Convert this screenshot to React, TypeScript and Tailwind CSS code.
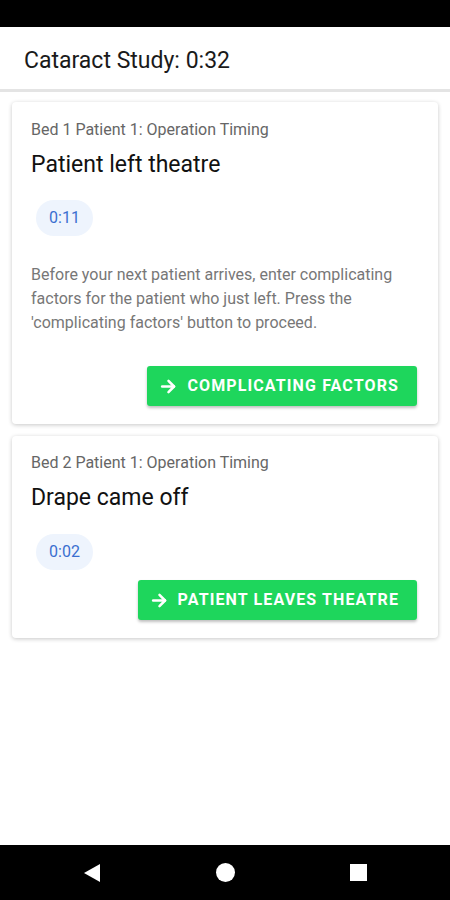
import React from "react";

function Arrow() {
  return (
    <svg width="19" height="19" viewBox="0 0 24 24" fill="none" stroke="white" strokeWidth="3.2" strokeLinecap="round" strokeLinejoin="round">
      <path d="M4 12h15" />
      <path d="M12 5l7 7-7 7" />
    </svg>
  );
}

function Chip({ time }: { time: string }) {
  return (
    <div className="flex h-[36px] w-[57px] items-center justify-center rounded-full bg-[#eef4fd] text-[16px] text-[#3a6fd0]">
      {time}
    </div>
  );
}

function GreenButton({ label }: { label: string }) {
  return (
    <button className="flex h-[40px] items-center gap-[9px] rounded-[3px] bg-[#1ed65c] pl-[12px] pr-[18px] text-[16px] font-bold tracking-[0.07em] text-white shadow-[0_2px_3px_rgba(0,0,0,0.25)]">
      <Arrow />
      {label}
    </button>
  );
}

export default function App() {
  return (
    <div className="flex h-[900px] flex-col bg-white font-['Roboto',sans-serif]">
      <div className="h-[27px] bg-black" />
      <div className="flex h-[65px] items-center border-b-[3px] border-[#e4e4e4] px-6 pt-[6px] text-[23px] text-[#1a1a1a]">
        Cataract Study: 0:32
      </div>
      <div className="flex flex-1 flex-col gap-3 px-3 pt-[10px]">
        <div className="rounded-[4px] bg-white px-[19px] pb-[18px] pt-[18px] shadow-[0_1px_4px_rgba(0,0,0,0.22)]">
          <div className="text-[16px] leading-[20px] text-[#666]">Bed 1 Patient 1: Operation Timing</div>
          <div className="mt-[11px] text-[23px] leading-[28px] text-[#111]">Patient left theatre</div>
          <div className="mt-[21px] ml-[5px]">
            <Chip time="0:11" />
          </div>
          <p className="mt-[27px] text-[16px] leading-[24px] text-[#777]">
            Before your next patient arrives, enter complicating factors for the patient who just left. Press the 'complicating factors' button to proceed.
          </p>
          <div className="mt-[31px] flex justify-end pr-[2px]">
            <GreenButton label="COMPLICATING FACTORS" />
          </div>
        </div>
        <div className="rounded-[4px] bg-white px-[19px] pb-[18px] pt-[17px] shadow-[0_1px_4px_rgba(0,0,0,0.22)]">
          <div className="text-[16px] leading-[20px] text-[#666]">Bed 2 Patient 1: Operation Timing</div>
          <div className="mt-[11px] text-[23px] leading-[28px] text-[#111]">Drape came off</div>
          <div className="mt-[22px] ml-[5px]">
            <Chip time="0:02" />
          </div>
          <div className="mt-[10px] flex justify-end pr-[2px]">
            <GreenButton label="PATIENT LEAVES THEATRE" />
          </div>
        </div>
      </div>
      <div className="flex h-[55px] items-center justify-between bg-black px-[83px]">
        <svg width="18" height="20" viewBox="0 0 18 20">
          <path d="M17 1L1 10l16 9z" fill="white" />
        </svg>
        <div className="h-[19px] w-[19px] rounded-full bg-white" />
        <div className="h-[17px] w-[17px] bg-white" />
      </div>
    </div>
  );
}
